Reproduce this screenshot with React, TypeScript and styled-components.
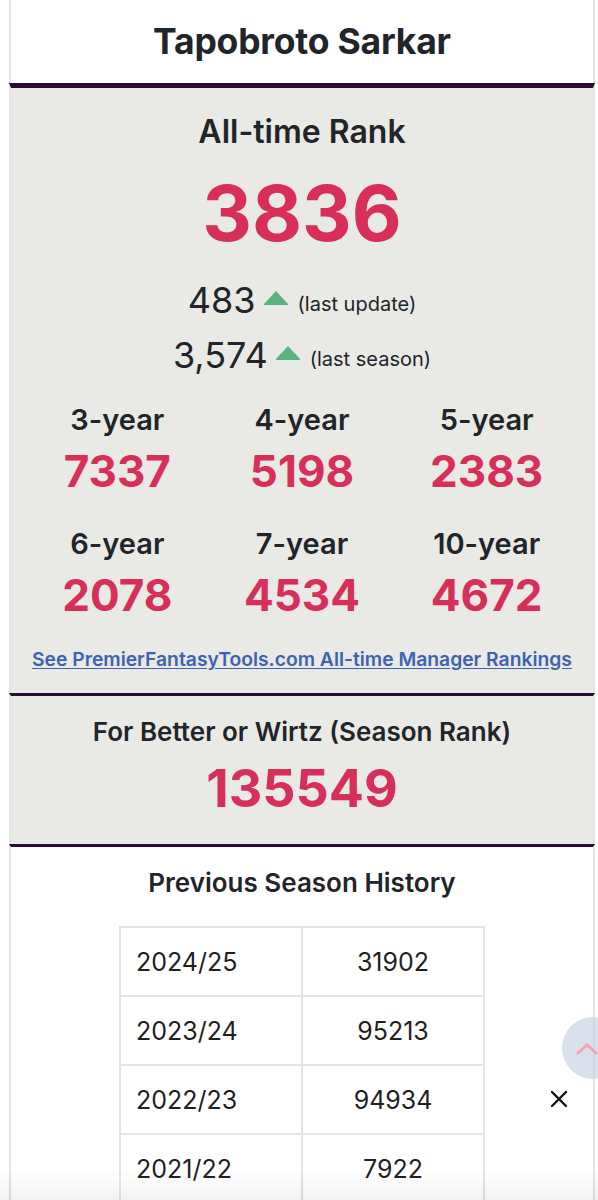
import React from 'react';
import styled, { createGlobalStyle } from 'styled-components';

const GlobalStyle = createGlobalStyle`
  body {
    margin: 0;
    background: #fff;
    font-family: Inter, "Noto Sans", "Liberation Sans", sans-serif;
    color: #212529;
  }
`;

const Page = styled.div`
  position: relative;
  width: 598px;
  height: 1200px;
  overflow: hidden;
  background: #fff;
`;

const Card = styled.div`
  margin-left: 9px;
  width: 586px;
`;

const Section = styled.section<{ $tone?: 'gray' | 'white'; $rule?: number; $pad?: string }>`
  border-left: 2px solid #e3e3e3;
  border-right: 2px solid #e3e3e3;
  border-top: ${(p) => (p.$rule ? `${p.$rule}px solid #2b0a33` : 'none')};
  background: ${(p) => (p.$tone === 'gray' ? '#e9e9e5' : '#fff')};
  padding: ${(p) => p.$pad || '0'};
  display: flex;
  flex-direction: column;
  align-items: center;
  text-align: center;
`;

const Name = styled.h1`
  margin: 0;
  height: 83px;
  display: flex;
  align-items: center;
  font-size: 35.5px;
  font-weight: 700;
  letter-spacing: -0.2px;
`;

const Heading = styled.h2<{ $size?: number }>`
  margin: 0;
  font-size: ${(p) => p.$size || 26}px;
  line-height: 32px;
  font-weight: 600;
`;

const BigRank = styled.div<{ $size: number; $gap: number }>`
  margin-top: ${(p) => p.$gap}px;
  font-size: ${(p) => p.$size}px;
  line-height: ${(p) => p.$size + 4}px;
  font-weight: 700;
  color: #d72f5a;
`;

const Change = styled.div<{ $gap: number }>`
  margin-top: ${(p) => p.$gap}px;
  display: flex;
  align-items: center;
  height: 36px;
`;

const ChangeValue = styled.span`
  font-size: 36px;
  line-height: 36px;
  font-weight: 400;
`;

const UpArrow = styled.span`
  width: 0;
  height: 0;
  margin: 0 9px 4px 7px;
  border-left: 13px solid transparent;
  border-right: 13px solid transparent;
  border-bottom: 14px solid #5cb27f;
  border-radius: 2px;
`;

const ChangeNote = styled.span`
  font-size: 20px;
  margin-top: 8px;
`;

const Periods = styled.div`
  align-self: stretch;
  margin-top: 32px;
  padding: 0 14px;
  display: grid;
  grid-template-columns: repeat(3, 1fr);
  row-gap: 34px;
`;

const Period = styled.div`
  display: flex;
  flex-direction: column;
  align-items: center;
  gap: 12px;
`;

const PeriodLabel = styled.div`
  font-size: 29px;
  line-height: 30px;
  font-weight: 600;
`;

const PeriodRank = styled.div`
  font-size: 44px;
  line-height: 48px;
  font-weight: 700;
  color: #d72f5a;
`;

const RankingsLink = styled.a`
  margin-top: 29px;
  font-size: 19.3px;
  line-height: 22px;
  font-weight: 600;
  color: #3d62b4;
  text-decoration: underline;
  text-underline-offset: 2px;
`;

const History = styled.table`
  margin-top: 27px;
  width: 366px;
  border-collapse: collapse;
`;

const Cell = styled.td<{ $left?: boolean }>`
  width: 50%;
  height: 67px;
  border: 2px solid #e4e4e4;
  padding: 0 15px;
  font-size: 25px;
  font-weight: 400;
  color: #1f1f1f;
  text-align: ${(p) => (p.$left ? 'left' : 'center')};
`;

const Close = styled.button`
  position: absolute;
  left: 547px;
  top: 1087px;
  width: 24px;
  height: 24px;
  padding: 0;
  border: none;
  background: none;
  display: flex;
  align-items: center;
  justify-content: center;
`;

const ScrollTop = styled.div`
  position: absolute;
  left: 562px;
  top: 1017px;
  width: 62px;
  height: 62px;
  border-radius: 50%;
  background: rgba(196, 206, 224, 0.65);
  display: flex;
  align-items: center;
  padding-left: 14px;
  box-sizing: border-box;
`;

const BottomFade = styled.div`
  position: absolute;
  left: 0;
  right: 0;
  bottom: 0;
  height: 30px;
  background: linear-gradient(rgba(0, 0, 0, 0), rgba(0, 0, 0, 0.05));
  pointer-events: none;
`;

const periods = [
  { label: '3-year', rank: 7337 },
  { label: '4-year', rank: 5198 },
  { label: '5-year', rank: 2383 },
  { label: '6-year', rank: 2078 },
  { label: '7-year', rank: 4534 },
  { label: '10-year', rank: 4672 },
];

const seasons = [
  { season: '2024/25', rank: 31902 },
  { season: '2023/24', rank: 95213 },
  { season: '2022/23', rank: 94934 },
  { season: '2021/22', rank: 7922 },
];

export default function App() {
  return (
    <Page>
      <GlobalStyle />
      <Card>
        <Section>
          <Name>Tapobroto Sarkar</Name>
        </Section>

        <Section $tone="gray" $rule={5} $pad="28px 0 23px">
          <Heading $size={32}>All-time Rank</Heading>
          <BigRank $size={77} $gap={25}>3836</BigRank>
          <Change $gap={28}>
            <ChangeValue>483</ChangeValue>
            <UpArrow />
            <ChangeNote>(last update)</ChangeNote>
          </Change>
          <Change $gap={19}>
            <ChangeValue>3,574</ChangeValue>
            <UpArrow />
            <ChangeNote>(last season)</ChangeNote>
          </Change>
          <Periods>
            {periods.map((p) => (
              <Period key={p.label}>
                <PeriodLabel>{p.label}</PeriodLabel>
                <PeriodRank>{p.rank}</PeriodRank>
              </Period>
            ))}
          </Periods>
          <RankingsLink href="#">See PremierFantasyTools.com All-time Manager Rankings</RankingsLink>
        </Section>

        <Section $tone="gray" $rule={3} $pad="20px 0 27px">
          <Heading $size={26}>For Better or Wirtz (Season Rank)</Heading>
          <BigRank $size={52} $gap={13}>135549</BigRank>
        </Section>

        <Section $rule={3} $pad="20px 0 40px">
          <Heading $size={26}>Previous Season History</Heading>
          <History>
            <tbody>
              {seasons.map((s) => (
                <tr key={s.season}>
                  <Cell $left>{s.season}</Cell>
                  <Cell>{s.rank}</Cell>
                </tr>
              ))}
            </tbody>
          </History>
        </Section>
      </Card>

      <ScrollTop>
        <svg width="22" height="14" viewBox="0 0 22 14">
          <path d="M2 12 L11 4 L20 12" fill="none" stroke="#f2a3b3" strokeWidth="3" strokeLinecap="round" />
        </svg>
      </ScrollTop>
      <Close aria-label="Close">
        <svg width="18" height="18" viewBox="0 0 18 18">
          <path d="M2 2 L16 16 M16 2 L2 16" stroke="#111" strokeWidth="2.4" strokeLinecap="round" />
        </svg>
      </Close>
      <BottomFade />
    </Page>
  );
}
